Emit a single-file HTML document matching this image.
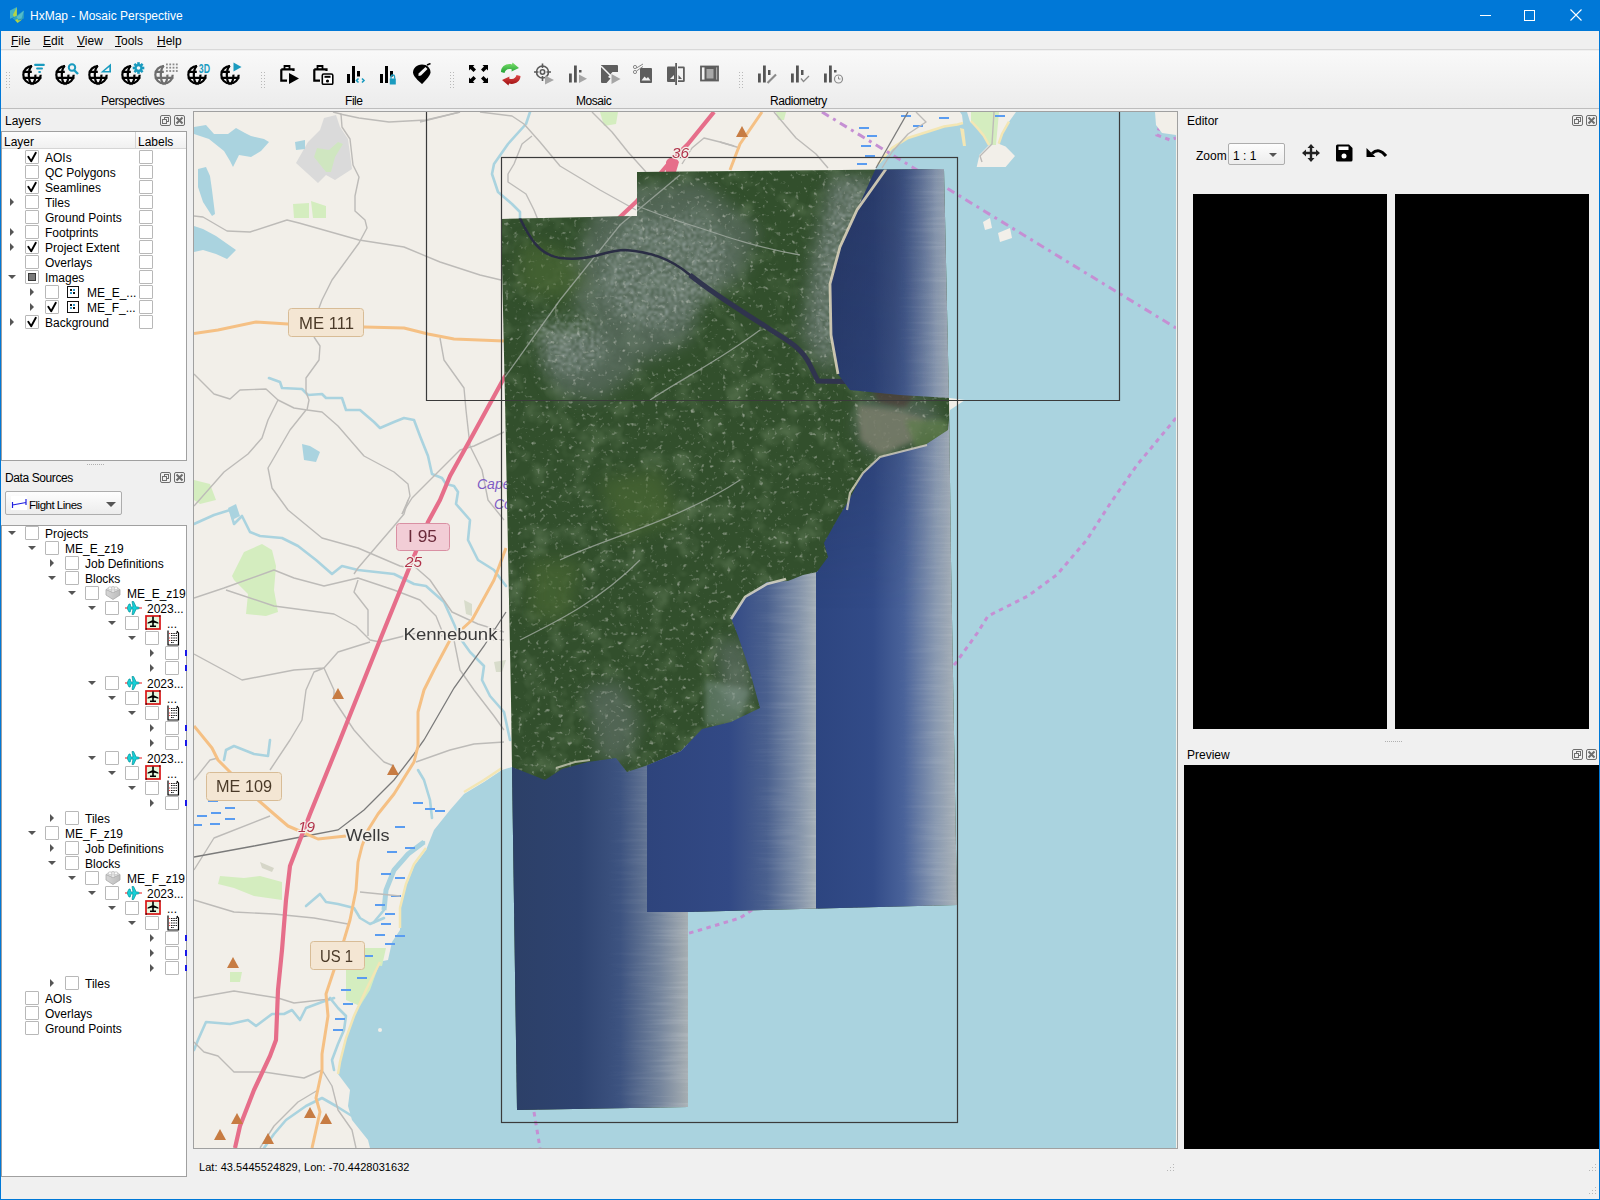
<!DOCTYPE html>
<html><head><meta charset="utf-8">
<style>
*{margin:0;padding:0;box-sizing:border-box}
html,body{width:1600px;height:1200px;overflow:hidden;background:#f0f0f0;font-family:"Liberation Sans",sans-serif;font-size:12px;color:#000}
.a{position:absolute}
#title{left:0;top:0;width:1600px;height:31px;background:#0078d7;color:#fff}
#wb{left:0;top:0;width:1600px;height:1200px;border:1px solid #0078d7;border-top:none;pointer-events:none}
.t{position:absolute;white-space:nowrap;line-height:14px}
.cb{position:absolute;width:14px;height:14px;border:1px solid #b8b8b8;border-radius:1px;background:#fff}
.arr{position:absolute;width:0;height:0}
.ad{border-left:4px solid transparent;border-right:4px solid transparent;border-top:4px solid #555}
.ar{border-top:4px solid transparent;border-bottom:4px solid transparent;border-left:4px solid #555}
.dockbtn{position:absolute;width:11px;height:11px;border:1px solid #6e6e6e;border-radius:2px}
.tbl{position:absolute;top:94px;font-size:12px;line-height:14px;letter-spacing:-0.45px}
</style></head><body>
<div id="title" class="a">
  <svg class="a" style="left:9px;top:6px" width="16" height="18" viewBox="0 0 16 18"><path d="M1 4.5 L7.8 1 L7.8 10 L1 12.7Z" fill="#42b2c6"/><path d="M3.5 12.5 L14.8 4.5 L14.8 12.5 L7.5 15Z" fill="#2fa2bd"/><path d="M7.5 11 L14.8 4.8 L12.5 12.5 L9 13Z" fill="#55bccb"/><path d="M3.8 9 L7.8 1.2 L7.8 9.8 L5.2 10.8Z" fill="#b5d444"/><path d="M6 14 L8.5 17 L13.5 13.3 L9.5 14.5 L8.5 13Z" fill="#b5d444"/></svg>
  <div class="t" style="left:30px;top:9px;font-size:12px;line-height:15px">HxMap - Mosaic Perspective</div>
  <div class="a" style="left:1480px;top:15px;width:11px;height:1px;background:#fff"></div>
  <div class="a" style="left:1524px;top:10px;width:11px;height:11px;border:1px solid #fff"></div>
  <svg class="a" style="left:1570px;top:9px" width="12" height="12"><path d="M0.5 0.5L11.5 11.5M11.5 0.5L0.5 11.5" stroke="#fff" stroke-width="1.1"/></svg>
</div>
<!-- menu -->
<div class="a" style="left:1px;top:31px;width:1598px;height:19px;background:#f0f0f0;border-bottom:1px solid #d9d9d9"></div>
<div class="t" style="left:11px;top:34px"><u>F</u>ile</div>
<div class="t" style="left:43px;top:34px"><u>E</u>dit</div>
<div class="t" style="left:77px;top:34px"><u>V</u>iew</div>
<div class="t" style="left:115px;top:34px"><u>T</u>ools</div>
<div class="t" style="left:157px;top:34px"><u>H</u>elp</div>
<!-- toolbar -->
<div class="a" style="left:1px;top:51px;width:1598px;height:58px;background:linear-gradient(#f9f9f9,#ececec);border-bottom:1px solid #bdbdbd"></div>
<svg class="a" style="left:6px;top:72px" width="4" height="16" viewBox="0 0 4 16"><rect x="0" y="0" width="1" height="1" fill="#b9b9b9"/><rect x="0" y="3" width="1" height="1" fill="#b9b9b9"/><rect x="0" y="6" width="1" height="1" fill="#b9b9b9"/><rect x="0" y="9" width="1" height="1" fill="#b9b9b9"/><rect x="0" y="12" width="1" height="1" fill="#b9b9b9"/><rect x="0" y="15" width="1" height="1" fill="#b9b9b9"/><rect x="3" y="0" width="1" height="1" fill="#b9b9b9"/><rect x="3" y="3" width="1" height="1" fill="#b9b9b9"/><rect x="3" y="6" width="1" height="1" fill="#b9b9b9"/><rect x="3" y="9" width="1" height="1" fill="#b9b9b9"/><rect x="3" y="12" width="1" height="1" fill="#b9b9b9"/><rect x="3" y="15" width="1" height="1" fill="#b9b9b9"/></svg>
<svg class="a" style="left:261px;top:72px" width="4" height="16" viewBox="0 0 4 16"><rect x="0" y="0" width="1" height="1" fill="#b9b9b9"/><rect x="0" y="3" width="1" height="1" fill="#b9b9b9"/><rect x="0" y="6" width="1" height="1" fill="#b9b9b9"/><rect x="0" y="9" width="1" height="1" fill="#b9b9b9"/><rect x="0" y="12" width="1" height="1" fill="#b9b9b9"/><rect x="0" y="15" width="1" height="1" fill="#b9b9b9"/><rect x="3" y="0" width="1" height="1" fill="#b9b9b9"/><rect x="3" y="3" width="1" height="1" fill="#b9b9b9"/><rect x="3" y="6" width="1" height="1" fill="#b9b9b9"/><rect x="3" y="9" width="1" height="1" fill="#b9b9b9"/><rect x="3" y="12" width="1" height="1" fill="#b9b9b9"/><rect x="3" y="15" width="1" height="1" fill="#b9b9b9"/></svg>
<svg class="a" style="left:450px;top:72px" width="4" height="16" viewBox="0 0 4 16"><rect x="0" y="0" width="1" height="1" fill="#b9b9b9"/><rect x="0" y="3" width="1" height="1" fill="#b9b9b9"/><rect x="0" y="6" width="1" height="1" fill="#b9b9b9"/><rect x="0" y="9" width="1" height="1" fill="#b9b9b9"/><rect x="0" y="12" width="1" height="1" fill="#b9b9b9"/><rect x="0" y="15" width="1" height="1" fill="#b9b9b9"/><rect x="3" y="0" width="1" height="1" fill="#b9b9b9"/><rect x="3" y="3" width="1" height="1" fill="#b9b9b9"/><rect x="3" y="6" width="1" height="1" fill="#b9b9b9"/><rect x="3" y="9" width="1" height="1" fill="#b9b9b9"/><rect x="3" y="12" width="1" height="1" fill="#b9b9b9"/><rect x="3" y="15" width="1" height="1" fill="#b9b9b9"/></svg>
<svg class="a" style="left:739px;top:72px" width="4" height="16" viewBox="0 0 4 16"><rect x="0" y="0" width="1" height="1" fill="#b9b9b9"/><rect x="0" y="3" width="1" height="1" fill="#b9b9b9"/><rect x="0" y="6" width="1" height="1" fill="#b9b9b9"/><rect x="0" y="9" width="1" height="1" fill="#b9b9b9"/><rect x="0" y="12" width="1" height="1" fill="#b9b9b9"/><rect x="0" y="15" width="1" height="1" fill="#b9b9b9"/><rect x="3" y="0" width="1" height="1" fill="#b9b9b9"/><rect x="3" y="3" width="1" height="1" fill="#b9b9b9"/><rect x="3" y="6" width="1" height="1" fill="#b9b9b9"/><rect x="3" y="9" width="1" height="1" fill="#b9b9b9"/><rect x="3" y="12" width="1" height="1" fill="#b9b9b9"/><rect x="3" y="15" width="1" height="1" fill="#b9b9b9"/></svg>
<svg class="a" style="left:21px;top:62px" width="27" height="24" viewBox="0 0 27 24"><g fill="none" stroke="#000" stroke-width="2.2">
<path d="M11 4.1 A8.7 8.7 0 1 0 19.7 12.8"/>
<path d="M10.8 3.6 C6.8 7.5 6.8 18.5 10.8 22.4 M1.8 9.9 H10.8 M1.8 15.85 H20.4 M14.4 12.6 C14.6 17 13.7 20 11.3 22.4"/>
</g><g fill="#1a9bbf"><rect x="13.1" y="1.8" width="10.7" height="2.1" rx="1"/><rect x="15.1" y="5.4" width="6.9" height="2.1" rx="1"/><rect x="17.2" y="9" width="2.8" height="2.1" rx="1"/></g></svg>
<svg class="a" style="left:54px;top:62px" width="27" height="24" viewBox="0 0 27 24"><g fill="none" stroke="#000" stroke-width="2.2">
<path d="M11 4.1 A8.7 8.7 0 1 0 19.7 12.8"/>
<path d="M10.8 3.6 C6.8 7.5 6.8 18.5 10.8 22.4 M1.8 9.9 H10.8 M1.8 15.85 H20.4 M14.4 12.6 C14.6 17 13.7 20 11.3 22.4"/>
</g><circle cx="18" cy="5.5" r="3.2" fill="none" stroke="#1a9bbf" stroke-width="2"/><path d="M20 8 L24 12" stroke="#1a9bbf" stroke-width="2.4"/></svg>
<svg class="a" style="left:87px;top:62px" width="27" height="24" viewBox="0 0 27 24"><g fill="none" stroke="#000" stroke-width="2.2">
<path d="M11 4.1 A8.7 8.7 0 1 0 19.7 12.8"/>
<path d="M10.8 3.6 C6.8 7.5 6.8 18.5 10.8 22.4 M1.8 9.9 H10.8 M1.8 15.85 H20.4 M14.4 12.6 C14.6 17 13.7 20 11.3 22.4"/>
</g><path d="M13.5 10.5 L24 1.5 V10.5Z M17.5 9 L22.3 9 V5Z" fill="#1a9bbf" fill-rule="evenodd"/></svg>
<svg class="a" style="left:120px;top:62px" width="27" height="24" viewBox="0 0 27 24"><g fill="none" stroke="#000" stroke-width="2.2">
<path d="M11 4.1 A8.7 8.7 0 1 0 19.7 12.8"/>
<path d="M10.8 3.6 C6.8 7.5 6.8 18.5 10.8 22.4 M1.8 9.9 H10.8 M1.8 15.85 H20.4 M14.4 12.6 C14.6 17 13.7 20 11.3 22.4"/>
</g><rect x="17.2" y="0.2" width="2.6" height="11.6" fill="#1a9bbf" transform="rotate(0 18.5 6)"/><rect x="17.2" y="0.2" width="2.6" height="11.6" fill="#1a9bbf" transform="rotate(45 18.5 6)"/><rect x="17.2" y="0.2" width="2.6" height="11.6" fill="#1a9bbf" transform="rotate(90 18.5 6)"/><rect x="17.2" y="0.2" width="2.6" height="11.6" fill="#1a9bbf" transform="rotate(135 18.5 6)"/><circle cx="18.5" cy="6" r="4" fill="#1a9bbf"/><circle cx="18.5" cy="6" r="1.8" fill="#f6f6f6"/></svg>
<svg class="a" style="left:153px;top:62px" width="27" height="24" viewBox="0 0 27 24"><g fill="none" stroke="#6d6d6d" stroke-width="2.2">
<path d="M11 4.1 A8.7 8.7 0 1 0 19.7 12.8"/>
<path d="M10.8 3.6 C6.8 7.5 6.8 18.5 10.8 22.4 M1.8 9.9 H10.8 M1.8 15.85 H20.4 M14.4 12.6 C14.6 17 13.7 20 11.3 22.4"/>
</g><rect x="13.0" y="1.5" width="1.8" height="1.8" fill="#8a8a8a"/><rect x="13.0" y="4.8" width="1.8" height="1.8" fill="#8a8a8a"/><rect x="13.0" y="8.1" width="1.8" height="1.8" fill="#8a8a8a"/><rect x="16.3" y="1.5" width="1.8" height="1.8" fill="#8a8a8a"/><rect x="16.3" y="4.8" width="1.8" height="1.8" fill="#8a8a8a"/><rect x="16.3" y="8.1" width="1.8" height="1.8" fill="#8a8a8a"/><rect x="19.6" y="1.5" width="1.8" height="1.8" fill="#8a8a8a"/><rect x="19.6" y="4.8" width="1.8" height="1.8" fill="#8a8a8a"/><rect x="19.6" y="8.1" width="1.8" height="1.8" fill="#8a8a8a"/><rect x="22.9" y="1.5" width="1.8" height="1.8" fill="#8a8a8a"/><rect x="22.9" y="4.8" width="1.8" height="1.8" fill="#8a8a8a"/><rect x="22.9" y="8.1" width="1.8" height="1.8" fill="#8a8a8a"/></svg>
<svg class="a" style="left:186px;top:62px" width="27" height="24" viewBox="0 0 27 24"><g fill="none" stroke="#000" stroke-width="2.2">
<path d="M11 4.1 A8.7 8.7 0 1 0 19.7 12.8"/>
<path d="M10.8 3.6 C6.8 7.5 6.8 18.5 10.8 22.4 M1.8 9.9 H10.8 M1.8 15.85 H20.4 M14.4 12.6 C14.6 17 13.7 20 11.3 22.4"/>
</g><text x="12.8" y="11" font-family="Liberation Sans" font-weight="bold" font-size="13" fill="#1a9bbf" textLength="11.2" lengthAdjust="spacingAndGlyphs">3D</text></svg>
<svg class="a" style="left:219px;top:62px" width="27" height="24" viewBox="0 0 27 24"><g fill="none" stroke="#000" stroke-width="2.2">
<path d="M11 4.1 A8.7 8.7 0 1 0 19.7 12.8"/>
<path d="M10.8 3.6 C6.8 7.5 6.8 18.5 10.8 22.4 M1.8 9.9 H10.8 M1.8 15.85 H20.4 M14.4 12.6 C14.6 17 13.7 20 11.3 22.4"/>
</g><path d="M14.5 0.5 L22.5 5 L14.5 9.5Z" fill="#1a9bbf"/></svg>
<svg class="a" style="left:277px;top:63px" width="24" height="22" viewBox="0 0 24 22"><path d="M4.3 6.3 H16.5 V8 M4.3 6.3 V17.7 H10" fill="none" stroke="#000" stroke-width="2.2"/><path d="M7.5 6 V3 H12.5 V6" fill="none" stroke="#000" stroke-width="1.8"/><path d="M12 10 L22 15.5 L12 21Z" fill="#000"/></svg>
<svg class="a" style="left:310px;top:63px" width="24" height="22" viewBox="0 0 24 22"><path d="M4.3 6.3 H16.5 V8 M4.3 6.3 V17.7 H10" fill="none" stroke="#000" stroke-width="2.2"/><path d="M7.5 6 V3 H12.5 V6" fill="none" stroke="#000" stroke-width="1.8"/><rect x="12.3" y="11" width="10.5" height="10.4" rx="1.5" fill="#fff" stroke="#000" stroke-width="1.6"/><rect x="14.5" y="12.8" width="6" height="2" fill="#000"/><circle cx="17.5" cy="18" r="1.6" fill="#000"/></svg>
<svg class="a" style="left:346px;top:64px" width="22" height="21" viewBox="0 0 22 21"><rect x="1" y="10" width="3" height="9" fill="#000"/><rect x="6" y="2" width="3" height="17" fill="#000"/><rect x="11" y="7" width="3" height="5.5" fill="#000"/><path d="M12.5 14.5 L10.5 16.5 L12.5 18.5 M16 14.5 L18 16.5 L16 18.5" fill="none" stroke="#1a9bbf" stroke-width="1.6"/></svg>
<svg class="a" style="left:379px;top:64px" width="22" height="21" viewBox="0 0 22 21"><rect x="1" y="10" width="3" height="9" fill="#000"/><rect x="6" y="2" width="3" height="17" fill="#000"/><rect x="11" y="7" width="3" height="5.5" fill="#000"/><rect x="10.8" y="14.5" width="6" height="6" fill="#1a9bbf"/><path d="M12 14.8 V12.8 A1.8 1.8 0 0 1 15.6 12.8 V14.8" fill="none" stroke="#1a9bbf" stroke-width="1.3"/></svg>
<svg class="a" style="left:412px;top:63px" width="20" height="22" viewBox="0 0 20 22"><path d="M10 1.5 C4.5 1.5 1 5.5 1 9.5 C1 14 10 21 10 21 C10 21 18.5 13 18.5 9.5 C18.5 5 15 1.5 10 1.5Z" fill="#000"/><path d="M6.5 13 L6.5 10.5 L13.5 4 L15.5 6 L9 12.5Z" fill="#f3f3f3"/><path d="M15 2 L18.5 0.5" stroke="#000" stroke-width="1.5"/></svg>
<svg class="a" style="left:468px;top:64px" width="21" height="20" viewBox="0 0 21 20"><path d="M1 1 H6.5 L5 2.5 L8 5.5 L5.5 8 L2.5 5 L1 6.5Z M20 1 V6.5 L18.5 5 L15.5 8 L13 5.5 L16 2.5 L14.5 1Z M1 19 V13.5 L2.5 15 L5.5 12 L8 14.5 L5 17.5 L6.5 19Z M20 19 H14.5 L16 17.5 L13 14.5 L15.5 12 L18.5 15 L20 13.5Z" fill="#000"/></svg>
<svg class="a" style="left:499px;top:62px" width="24" height="24" viewBox="0 0 24 24"><defs><linearGradient id="gg" x1="0" y1="0" x2="0" y2="1"><stop offset="0" stop-color="#7be06a"/><stop offset="1" stop-color="#21a035"/></linearGradient><linearGradient id="rg" x1="0" y1="0" x2="0" y2="1"><stop offset="0" stop-color="#e04848"/><stop offset="1" stop-color="#9a0c0c"/></linearGradient></defs><path d="M2 10 C2 4 8 1 13 2.5 L13.5 0.5 L20 6 L12.5 9.5 L12.8 7.5 C9 6 6 8 5.5 11Z" fill="url(#gg)"/><path d="M21.5 14 C21.5 20 15 23 10 21.5 L9.5 23.5 L3 18 L10.5 14.5 L10.2 16.5 C14 18 17 16 17.5 13Z" fill="url(#rg)"/></svg>
<svg class="a" style="left:533px;top:63px" width="24" height="22" viewBox="0 0 24 22"><g fill="none" stroke="#5a5a5a" stroke-width="1.6"><circle cx="9.5" cy="9" r="6"/><circle cx="9.5" cy="9" r="2.2"/><path d="M9.5 0.5V5M9.5 13V18M1 9H5.5M13.5 9H18"/></g><path d="M12 12.5 L21 17 L12 21.5Z" fill="#a6a6a6"/></svg>
<svg class="a" style="left:568px;top:64px" width="22" height="21" viewBox="0 0 22 21"><rect x="1" y="9.5" width="2.8" height="9" fill="#555"/><rect x="6" y="1.5" width="2.8" height="17" fill="#555"/><rect x="11" y="6" width="2.5" height="2.5" fill="#555"/><path d="M11 10.5 L19 14.8 L11 19Z" fill="#a6a6a6"/></svg>
<svg class="a" style="left:600px;top:64px" width="22" height="21" viewBox="0 0 22 21"><path d="M1 1 H17 Q18 1 18 2 V8 H12.5 L8 13 L10.5 14.5 L6.5 19 H2 Q1 19 1 18Z" fill="#5e5e5e"/><path d="M1 2 L10 11" stroke="#f5f5f5" stroke-width="1.5"/><path d="M11.5 10 L20.5 15 L11.5 20Z" fill="#a6a6a6"/></svg>
<svg class="a" style="left:632px;top:63px" width="22" height="22" viewBox="0 0 22 22"><path d="M8 5 V19 Q8 20 9 20 H19 Q20 20 20 19 V6 Q20 5 19 5Z" fill="#5e5e5e"/><path d="M9.5 17.5 L12.5 13.5 L14.5 15.5 L16 14 L18.5 17.5Z" fill="#f3f3f3"/><g fill="none" stroke="#8a8a8a" stroke-width="1"><circle cx="3" cy="4" r="1.6"/><circle cx="3" cy="9" r="1.6"/><path d="M4.5 5 L11 1 M4.5 8 L11 3.5"/></g></svg>
<svg class="a" style="left:666px;top:62px" width="20" height="24" viewBox="0 0 20 24"><path d="M9.2 4.5 H2 Q1 4.5 1 5.5 V19 Q1 20 2 20 H9.2Z" fill="#5e5e5e"/><path d="M4 17 L8 13 V17Z" fill="#f3f3f3"/><rect x="9.2" y="1" width="1.8" height="22" fill="#5e5e5e"/><path d="M12 4.5 H17.5 Q18.8 4.5 18.8 5.8 V18.8 Q18.8 20 17.5 20 H12 V18.3 H17 V6.2 H12Z M12.5 13 L16 17 H12.5Z" fill="#5e5e5e"/></svg>
<svg class="a" style="left:700px;top:64px" width="20" height="20" viewBox="0 0 20 20"><rect x="1" y="2.5" width="17" height="14" fill="none" stroke="#5e5e5e" stroke-width="1.8"/><rect x="4.5" y="3" width="12" height="13.5" fill="#5e5e5e"/><rect x="6.5" y="5" width="7" height="9.5" fill="#a8a8a8"/></svg>
<svg class="a" style="left:757px;top:64px" width="22" height="21" viewBox="0 0 22 21"><rect x="1" y="9.5" width="2.8" height="9" fill="#555"/><rect x="6" y="1.5" width="2.8" height="17" fill="#555"/><rect x="11" y="6" width="2.5" height="5" fill="#555"/><path d="M10.5 19 L19 10.5" stroke="#8a8a8a" stroke-width="2.2"/></svg>
<svg class="a" style="left:790px;top:64px" width="22" height="21" viewBox="0 0 22 21"><rect x="1" y="9.5" width="2.8" height="9" fill="#555"/><rect x="6" y="1.5" width="2.8" height="17" fill="#555"/><rect x="11" y="6" width="2.5" height="5" fill="#555"/><path d="M11 14.5 L13.5 17.5 L19 12" fill="none" stroke="#8a8a8a" stroke-width="1.3"/></svg>
<svg class="a" style="left:823px;top:64px" width="22" height="21" viewBox="0 0 22 21"><rect x="1" y="9.5" width="2.8" height="9" fill="#555"/><rect x="6" y="1.5" width="2.8" height="17" fill="#555"/><rect x="11" y="6" width="2.5" height="2.5" fill="#555"/><circle cx="15.5" cy="15" r="4" fill="none" stroke="#8a8a8a" stroke-width="1.2"/><path d="M15.5 12.5 V15 H17.5" fill="none" stroke="#8a8a8a" stroke-width="1"/></svg>
<div class="tbl" style="left:101px">Perspectives</div>
<div class="tbl" style="left:345px">File</div>
<div class="tbl" style="left:576px">Mosaic</div>
<div class="tbl" style="left:770px">Radiometry</div>

<!-- left dock -->
<div class="t" style="left:5px;top:114px;">Layers</div>
<div class="dockbtn" style="left:160px;top:115px"><svg width="9" height="9" style="position:absolute;left:0;top:0"><rect x="3.5" y="1.5" width="4" height="4" fill="none" stroke="#6e6e6e"/><rect x="1.5" y="3.5" width="4" height="4" fill="#f0f0f0" stroke="#6e6e6e"/></svg></div>
<div class="dockbtn" style="left:174px;top:115px"><svg width="9" height="9" style="position:absolute;left:0;top:0"><path d="M1.5 1.5L7.5 7.5M7.5 1.5L1.5 7.5" stroke="#6e6e6e" stroke-width="2"/></svg></div>
<div class="a" style="left:1px;top:131px;width:186px;height:330px;background:#fff;border:1px solid #a0a0a0"></div>
<div class="a" style="left:2px;top:132px;width:184px;height:17px;background:linear-gradient(#fdfdfd,#f0f0f0);border-bottom:1px solid #d5d5d5"></div>
<div class="a" style="left:135px;top:132px;width:1px;height:17px;background:#d5d5d5"></div>
<div class="t" style="left:4px;top:135px;">Layer</div>
<div class="t" style="left:138px;top:135px;">Labels</div>
<div class="cb" style="left:25px;top:150px"><svg width="12" height="12" style="position:absolute;left:0;top:0"><path d="M2.3 5.8 L5.2 10.3 L9.8 1.8" stroke="#000" stroke-width="1.9" fill="none" stroke-linejoin="round" stroke-linecap="round"/></svg></div>
<div class="t" style="left:45px;top:151px;">AOIs</div>
<div class="cb" style="left:139px;top:150px"></div>
<div class="cb" style="left:25px;top:165px"></div>
<div class="t" style="left:45px;top:166px;">QC Polygons</div>
<div class="cb" style="left:139px;top:165px"></div>
<div class="cb" style="left:25px;top:180px"><svg width="12" height="12" style="position:absolute;left:0;top:0"><path d="M2.3 5.8 L5.2 10.3 L9.8 1.8" stroke="#000" stroke-width="1.9" fill="none" stroke-linejoin="round" stroke-linecap="round"/></svg></div>
<div class="t" style="left:45px;top:181px;">Seamlines</div>
<div class="cb" style="left:139px;top:180px"></div>
<div class="arr ar" style="left:10px;top:198px"></div>
<div class="cb" style="left:25px;top:195px"></div>
<div class="t" style="left:45px;top:196px;">Tiles</div>
<div class="cb" style="left:139px;top:195px"></div>
<div class="cb" style="left:25px;top:210px"></div>
<div class="t" style="left:45px;top:211px;">Ground Points</div>
<div class="cb" style="left:139px;top:210px"></div>
<div class="arr ar" style="left:10px;top:228px"></div>
<div class="cb" style="left:25px;top:225px"></div>
<div class="t" style="left:45px;top:226px;">Footprints</div>
<div class="cb" style="left:139px;top:225px"></div>
<div class="arr ar" style="left:10px;top:243px"></div>
<div class="cb" style="left:25px;top:240px"><svg width="12" height="12" style="position:absolute;left:0;top:0"><path d="M2.3 5.8 L5.2 10.3 L9.8 1.8" stroke="#000" stroke-width="1.9" fill="none" stroke-linejoin="round" stroke-linecap="round"/></svg></div>
<div class="t" style="left:45px;top:241px;">Project Extent</div>
<div class="cb" style="left:139px;top:240px"></div>
<div class="cb" style="left:25px;top:255px"></div>
<div class="t" style="left:45px;top:256px;">Overlays</div>
<div class="cb" style="left:139px;top:255px"></div>
<div class="arr ad" style="left:8px;top:275px"></div>
<div class="cb" style="left:25px;top:270px"><div style="position:absolute;left:2px;top:2px;width:8px;height:8px;background:#7a7a7a;border:1px solid #3a3a3a"></div></div>
<div class="t" style="left:45px;top:271px;">Images</div>
<div class="cb" style="left:139px;top:270px"></div>
<div class="arr ar" style="left:30px;top:288px"></div>
<div class="cb" style="left:45px;top:285px"></div>
<div class="a" style="left:67px;top:286px;width:12px;height:12px;border:1.5px solid #111;background:#fff"><div style="position:absolute;left:2px;top:2px;width:2px;height:2px;background:#111"></div><div style="position:absolute;left:5px;top:2px;width:2px;height:2px;background:#2a9bd0"></div><div style="position:absolute;left:2px;top:5px;width:2px;height:2px;background:#2a9bd0"></div><div style="position:absolute;left:5px;top:5px;width:2px;height:2px;background:#111"></div></div>
<div class="t" style="left:87px;top:286px;">ME_E_...</div>
<div class="cb" style="left:139px;top:285px"></div>
<div class="arr ar" style="left:30px;top:303px"></div>
<div class="cb" style="left:45px;top:300px"><svg width="12" height="12" style="position:absolute;left:0;top:0"><path d="M2.3 5.8 L5.2 10.3 L9.8 1.8" stroke="#000" stroke-width="1.9" fill="none" stroke-linejoin="round" stroke-linecap="round"/></svg></div>
<div class="a" style="left:67px;top:301px;width:12px;height:12px;border:1.5px solid #111;background:#fff"><div style="position:absolute;left:2px;top:2px;width:2px;height:2px;background:#111"></div><div style="position:absolute;left:5px;top:2px;width:2px;height:2px;background:#2a9bd0"></div><div style="position:absolute;left:2px;top:5px;width:2px;height:2px;background:#2a9bd0"></div><div style="position:absolute;left:5px;top:5px;width:2px;height:2px;background:#111"></div></div>
<div class="t" style="left:87px;top:301px;">ME_F_...</div>
<div class="cb" style="left:139px;top:300px"></div>
<div class="arr ar" style="left:10px;top:318px"></div>
<div class="cb" style="left:25px;top:315px"><svg width="12" height="12" style="position:absolute;left:0;top:0"><path d="M2.3 5.8 L5.2 10.3 L9.8 1.8" stroke="#000" stroke-width="1.9" fill="none" stroke-linejoin="round" stroke-linecap="round"/></svg></div>
<div class="t" style="left:45px;top:316px;">Background</div>
<div class="cb" style="left:139px;top:315px"></div>
<div class="a" style="left:87px;top:464px;width:17px;height:1px;border-top:1px dotted #b0b0b0"></div>
<div class="t" style="left:5px;top:471px;letter-spacing:-0.4px">Data Sources</div>
<div class="dockbtn" style="left:160px;top:472px"><svg width="9" height="9" style="position:absolute;left:0;top:0"><rect x="3.5" y="1.5" width="4" height="4" fill="none" stroke="#6e6e6e"/><rect x="1.5" y="3.5" width="4" height="4" fill="#f0f0f0" stroke="#6e6e6e"/></svg></div>
<div class="dockbtn" style="left:174px;top:472px"><svg width="9" height="9" style="position:absolute;left:0;top:0"><path d="M1.5 1.5L7.5 7.5M7.5 1.5L1.5 7.5" stroke="#6e6e6e" stroke-width="2"/></svg></div>
<div class="a" style="left:5px;top:491px;width:117px;height:24px;border:1px solid #adadad;border-radius:2px;background:linear-gradient(#fdfdfd,#ececec)"></div>
<div class="a" style="left:11px;top:496px;width:16px;height:14px;background:#fff"><svg width="16" height="14"><path d="M1.5 6 V12 M1.5 9 L15 6.5 M15 3 V9" stroke="#1f1fe0" stroke-width="1.2" fill="none"/></svg></div>
<div class="t" style="left:29px;top:498px;letter-spacing:-0.5px;font-size:11.5px">Flight Lines</div>
<div class="arr ad" style="left:106px;top:502px;border-left-width:5px;border-right-width:5px;border-top-width:5px"></div>
<div class="a" style="left:1px;top:525px;width:186px;height:652px;background:#fff;border:1px solid #a0a0a0"></div>
<div class="arr ad" style="left:8px;top:531px"></div>
<div class="cb" style="left:25px;top:526px"></div>
<div class="t" style="left:45px;top:527px;">Projects</div>
<div class="arr ad" style="left:28px;top:546px"></div>
<div class="cb" style="left:45px;top:541px"></div>
<div class="t" style="left:65px;top:542px;">ME_E_z19</div>
<div class="arr ar" style="left:50px;top:559px"></div>
<div class="cb" style="left:65px;top:556px"></div>
<div class="t" style="left:85px;top:557px;">Job Definitions</div>
<div class="arr ad" style="left:48px;top:576px"></div>
<div class="cb" style="left:65px;top:571px"></div>
<div class="t" style="left:85px;top:572px;">Blocks</div>
<div class="arr ad" style="left:68px;top:591px"></div>
<div class="cb" style="left:85px;top:586px"></div>
<svg class="a" style="left:105px;top:585px" width="16" height="15" viewBox="0 0 16 15"><defs><linearGradient id="lg593" x1="0" x2="1"><stop offset="0" stop-color="#d6d6d6"/><stop offset="1" stop-color="#bcbcbc"/></linearGradient></defs><path d="M1 4.5 L8 7.5 L15 4.5 V10 L8 14.5 L1 10Z" fill="url(#lg593)" stroke="#a8a8a8" stroke-width="0.8"/><path d="M1 4.5 L8 1.5 L15 4.5 L8 7.5Z" fill="#f2f2f2" stroke="#b0b0b0" stroke-width="0.8"/><path d="M3.2 2.5 V4.2 Q5 5.6 6.8 4.2 V2.5 Q5 1 3.2 2.5Z M9.2 2.5 V4.2 Q11 5.6 12.8 4.2 V2.5 Q11 1 9.2 2.5Z M6.2 5 V6.6 Q8 8 9.8 6.6 V5Z" fill="#fafafa" stroke="#b4b4b4" stroke-width="0.7"/></svg>
<div class="t" style="left:127px;top:587px;">ME_E_z19</div>
<div class="arr ad" style="left:88px;top:606px"></div>
<div class="cb" style="left:105px;top:601px"></div>
<svg class="a" style="left:125px;top:601px" width="17" height="14" viewBox="0 0 17 14"><path d="M0 7H2.5M14 7H17" stroke="#e81818" stroke-width="1.1"/><path d="M2.5 6 L4 3 L5.2 3 L5.8 6 L8 6 L7 0.5 L8.6 0.5 L11.2 6 L13.5 6 Q15 7 13.5 8 L11.2 8 L8.6 13.5 L7 13.5 L8 8 L5.8 8 L5.2 11 L4 11 L2.5 8Z" fill="#14d0d8" stroke="#0a9098" stroke-width="0.7"/></svg>
<div class="t" style="left:147px;top:602px;">2023...</div>
<div class="arr ad" style="left:108px;top:621px"></div>
<div class="cb" style="left:125px;top:616px"></div>
<svg class="a" style="left:145px;top:615px" width="16" height="15" viewBox="0 0 16 15"><rect x="1" y="1" width="14" height="13" fill="#e4f8e0" stroke="#d81414" stroke-width="1.7"/><path d="M7.2 1.6 H8.8 V12 H7.2Z M2.6 7.6 L7.2 5.2 V7.4 L2.6 8.8Z M13.4 7.6 L8.8 5.2 V7.4 L13.4 8.8Z M5 10.6 H11 V12 H5Z" fill="#000"/><path d="M0.5 14H2M14 1H15.5" stroke="#000" stroke-width="1"/></svg>
<div class="t" style="left:167px;top:617px;">...</div>
<div class="arr ad" style="left:128px;top:636px"></div>
<div class="cb" style="left:145px;top:631px"></div>
<svg class="a" style="left:167px;top:630px" width="13" height="16" viewBox="0 0 13 16"><path d="M1 0.5 V15 H11.5 V3 L10 1.5" fill="#fff" stroke="#000" stroke-width="1.2"/><path d="M9.5 2.5 Q10 0.5 11 1.5" fill="none" stroke="#000" stroke-width="0.9"/><path d="M4 3.5H10M4 5.5H10M4 8H10M4 10.5H10M4 12.5H7" stroke="#000" stroke-width="0.9" stroke-dasharray="1.5 0.8"/><path d="M2.2 3.5H3.2M2.2 8H3.2M2.2 10.5H3.2" stroke="#e00" stroke-width="0.9"/></svg>
<div class="arr ar" style="left:150px;top:649px"></div>
<div class="cb" style="left:165px;top:646px"></div>
<div class="a" style="left:185px;top:650px;width:2px;height:6px;background:#1818e8"></div>
<div class="arr ar" style="left:150px;top:664px"></div>
<div class="cb" style="left:165px;top:661px"></div>
<div class="a" style="left:185px;top:665px;width:2px;height:6px;background:#1818e8"></div>
<div class="arr ad" style="left:88px;top:681px"></div>
<div class="cb" style="left:105px;top:676px"></div>
<svg class="a" style="left:125px;top:676px" width="17" height="14" viewBox="0 0 17 14"><path d="M0 7H2.5M14 7H17" stroke="#e81818" stroke-width="1.1"/><path d="M2.5 6 L4 3 L5.2 3 L5.8 6 L8 6 L7 0.5 L8.6 0.5 L11.2 6 L13.5 6 Q15 7 13.5 8 L11.2 8 L8.6 13.5 L7 13.5 L8 8 L5.8 8 L5.2 11 L4 11 L2.5 8Z" fill="#14d0d8" stroke="#0a9098" stroke-width="0.7"/></svg>
<div class="t" style="left:147px;top:677px;">2023...</div>
<div class="arr ad" style="left:108px;top:696px"></div>
<div class="cb" style="left:125px;top:691px"></div>
<svg class="a" style="left:145px;top:690px" width="16" height="15" viewBox="0 0 16 15"><rect x="1" y="1" width="14" height="13" fill="#e4f8e0" stroke="#d81414" stroke-width="1.7"/><path d="M7.2 1.6 H8.8 V12 H7.2Z M2.6 7.6 L7.2 5.2 V7.4 L2.6 8.8Z M13.4 7.6 L8.8 5.2 V7.4 L13.4 8.8Z M5 10.6 H11 V12 H5Z" fill="#000"/><path d="M0.5 14H2M14 1H15.5" stroke="#000" stroke-width="1"/></svg>
<div class="t" style="left:167px;top:692px;">...</div>
<div class="arr ad" style="left:128px;top:711px"></div>
<div class="cb" style="left:145px;top:706px"></div>
<svg class="a" style="left:167px;top:705px" width="13" height="16" viewBox="0 0 13 16"><path d="M1 0.5 V15 H11.5 V3 L10 1.5" fill="#fff" stroke="#000" stroke-width="1.2"/><path d="M9.5 2.5 Q10 0.5 11 1.5" fill="none" stroke="#000" stroke-width="0.9"/><path d="M4 3.5H10M4 5.5H10M4 8H10M4 10.5H10M4 12.5H7" stroke="#000" stroke-width="0.9" stroke-dasharray="1.5 0.8"/><path d="M2.2 3.5H3.2M2.2 8H3.2M2.2 10.5H3.2" stroke="#e00" stroke-width="0.9"/></svg>
<div class="arr ar" style="left:150px;top:724px"></div>
<div class="cb" style="left:165px;top:721px"></div>
<div class="a" style="left:185px;top:725px;width:2px;height:6px;background:#1818e8"></div>
<div class="arr ar" style="left:150px;top:739px"></div>
<div class="cb" style="left:165px;top:736px"></div>
<div class="a" style="left:185px;top:740px;width:2px;height:6px;background:#1818e8"></div>
<div class="arr ad" style="left:88px;top:756px"></div>
<div class="cb" style="left:105px;top:751px"></div>
<svg class="a" style="left:125px;top:751px" width="17" height="14" viewBox="0 0 17 14"><path d="M0 7H2.5M14 7H17" stroke="#e81818" stroke-width="1.1"/><path d="M2.5 6 L4 3 L5.2 3 L5.8 6 L8 6 L7 0.5 L8.6 0.5 L11.2 6 L13.5 6 Q15 7 13.5 8 L11.2 8 L8.6 13.5 L7 13.5 L8 8 L5.8 8 L5.2 11 L4 11 L2.5 8Z" fill="#14d0d8" stroke="#0a9098" stroke-width="0.7"/></svg>
<div class="t" style="left:147px;top:752px;">2023...</div>
<div class="arr ad" style="left:108px;top:771px"></div>
<div class="cb" style="left:125px;top:766px"></div>
<svg class="a" style="left:145px;top:765px" width="16" height="15" viewBox="0 0 16 15"><rect x="1" y="1" width="14" height="13" fill="#e4f8e0" stroke="#d81414" stroke-width="1.7"/><path d="M7.2 1.6 H8.8 V12 H7.2Z M2.6 7.6 L7.2 5.2 V7.4 L2.6 8.8Z M13.4 7.6 L8.8 5.2 V7.4 L13.4 8.8Z M5 10.6 H11 V12 H5Z" fill="#000"/><path d="M0.5 14H2M14 1H15.5" stroke="#000" stroke-width="1"/></svg>
<div class="t" style="left:167px;top:767px;">...</div>
<div class="arr ad" style="left:128px;top:786px"></div>
<div class="cb" style="left:145px;top:781px"></div>
<svg class="a" style="left:167px;top:780px" width="13" height="16" viewBox="0 0 13 16"><path d="M1 0.5 V15 H11.5 V3 L10 1.5" fill="#fff" stroke="#000" stroke-width="1.2"/><path d="M9.5 2.5 Q10 0.5 11 1.5" fill="none" stroke="#000" stroke-width="0.9"/><path d="M4 3.5H10M4 5.5H10M4 8H10M4 10.5H10M4 12.5H7" stroke="#000" stroke-width="0.9" stroke-dasharray="1.5 0.8"/><path d="M2.2 3.5H3.2M2.2 8H3.2M2.2 10.5H3.2" stroke="#e00" stroke-width="0.9"/></svg>
<div class="arr ar" style="left:150px;top:799px"></div>
<div class="cb" style="left:165px;top:796px"></div>
<div class="a" style="left:185px;top:800px;width:2px;height:6px;background:#1818e8"></div>
<div class="arr ar" style="left:50px;top:814px"></div>
<div class="cb" style="left:65px;top:811px"></div>
<div class="t" style="left:85px;top:812px;">Tiles</div>
<div class="arr ad" style="left:28px;top:831px"></div>
<div class="cb" style="left:45px;top:826px"></div>
<div class="t" style="left:65px;top:827px;">ME_F_z19</div>
<div class="arr ar" style="left:50px;top:844px"></div>
<div class="cb" style="left:65px;top:841px"></div>
<div class="t" style="left:85px;top:842px;">Job Definitions</div>
<div class="arr ad" style="left:48px;top:861px"></div>
<div class="cb" style="left:65px;top:856px"></div>
<div class="t" style="left:85px;top:857px;">Blocks</div>
<div class="arr ad" style="left:68px;top:876px"></div>
<div class="cb" style="left:85px;top:871px"></div>
<svg class="a" style="left:105px;top:870px" width="16" height="15" viewBox="0 0 16 15"><defs><linearGradient id="lg878" x1="0" x2="1"><stop offset="0" stop-color="#d6d6d6"/><stop offset="1" stop-color="#bcbcbc"/></linearGradient></defs><path d="M1 4.5 L8 7.5 L15 4.5 V10 L8 14.5 L1 10Z" fill="url(#lg878)" stroke="#a8a8a8" stroke-width="0.8"/><path d="M1 4.5 L8 1.5 L15 4.5 L8 7.5Z" fill="#f2f2f2" stroke="#b0b0b0" stroke-width="0.8"/><path d="M3.2 2.5 V4.2 Q5 5.6 6.8 4.2 V2.5 Q5 1 3.2 2.5Z M9.2 2.5 V4.2 Q11 5.6 12.8 4.2 V2.5 Q11 1 9.2 2.5Z M6.2 5 V6.6 Q8 8 9.8 6.6 V5Z" fill="#fafafa" stroke="#b4b4b4" stroke-width="0.7"/></svg>
<div class="t" style="left:127px;top:872px;">ME_F_z19</div>
<div class="arr ad" style="left:88px;top:891px"></div>
<div class="cb" style="left:105px;top:886px"></div>
<svg class="a" style="left:125px;top:886px" width="17" height="14" viewBox="0 0 17 14"><path d="M0 7H2.5M14 7H17" stroke="#e81818" stroke-width="1.1"/><path d="M2.5 6 L4 3 L5.2 3 L5.8 6 L8 6 L7 0.5 L8.6 0.5 L11.2 6 L13.5 6 Q15 7 13.5 8 L11.2 8 L8.6 13.5 L7 13.5 L8 8 L5.8 8 L5.2 11 L4 11 L2.5 8Z" fill="#14d0d8" stroke="#0a9098" stroke-width="0.7"/></svg>
<div class="t" style="left:147px;top:887px;">2023...</div>
<div class="arr ad" style="left:108px;top:906px"></div>
<div class="cb" style="left:125px;top:901px"></div>
<svg class="a" style="left:145px;top:900px" width="16" height="15" viewBox="0 0 16 15"><rect x="1" y="1" width="14" height="13" fill="#e4f8e0" stroke="#d81414" stroke-width="1.7"/><path d="M7.2 1.6 H8.8 V12 H7.2Z M2.6 7.6 L7.2 5.2 V7.4 L2.6 8.8Z M13.4 7.6 L8.8 5.2 V7.4 L13.4 8.8Z M5 10.6 H11 V12 H5Z" fill="#000"/><path d="M0.5 14H2M14 1H15.5" stroke="#000" stroke-width="1"/></svg>
<div class="t" style="left:167px;top:902px;">...</div>
<div class="arr ad" style="left:128px;top:921px"></div>
<div class="cb" style="left:145px;top:916px"></div>
<svg class="a" style="left:167px;top:915px" width="13" height="16" viewBox="0 0 13 16"><path d="M1 0.5 V15 H11.5 V3 L10 1.5" fill="#fff" stroke="#000" stroke-width="1.2"/><path d="M9.5 2.5 Q10 0.5 11 1.5" fill="none" stroke="#000" stroke-width="0.9"/><path d="M4 3.5H10M4 5.5H10M4 8H10M4 10.5H10M4 12.5H7" stroke="#000" stroke-width="0.9" stroke-dasharray="1.5 0.8"/><path d="M2.2 3.5H3.2M2.2 8H3.2M2.2 10.5H3.2" stroke="#e00" stroke-width="0.9"/></svg>
<div class="arr ar" style="left:150px;top:934px"></div>
<div class="cb" style="left:165px;top:931px"></div>
<div class="a" style="left:185px;top:935px;width:2px;height:6px;background:#1818e8"></div>
<div class="arr ar" style="left:150px;top:949px"></div>
<div class="cb" style="left:165px;top:946px"></div>
<div class="a" style="left:185px;top:950px;width:2px;height:6px;background:#1818e8"></div>
<div class="arr ar" style="left:150px;top:964px"></div>
<div class="cb" style="left:165px;top:961px"></div>
<div class="a" style="left:185px;top:965px;width:2px;height:6px;background:#1818e8"></div>
<div class="arr ar" style="left:50px;top:979px"></div>
<div class="cb" style="left:65px;top:976px"></div>
<div class="t" style="left:85px;top:977px;">Tiles</div>
<div class="cb" style="left:25px;top:991px"></div>
<div class="t" style="left:45px;top:992px;">AOIs</div>
<div class="cb" style="left:25px;top:1006px"></div>
<div class="t" style="left:45px;top:1007px;">Overlays</div>
<div class="cb" style="left:25px;top:1021px"></div>
<div class="t" style="left:45px;top:1022px;">Ground Points</div>
<!-- map -->
<div id="map" class="a" style="left:193px;top:111px;width:985px;height:1038px;border:1px solid #a0a0a0;overflow:hidden;background:#f2efe9"><svg style="position:absolute;left:0;top:0" width="982" height="1036" viewBox="194 112 982 1036">
<defs>
<filter id="mottle" x="494" y="160" width="470" height="960" filterUnits="userSpaceOnUse">
 <feTurbulence type="fractalNoise" baseFrequency="0.04" numOctaves="3" seed="7" result="n"/>
 <feColorMatrix in="n" type="matrix" values="0 0 0 0 0.28  0 0 0 0 0.40  0 0 0 0 0.23  0.9 0 0 0 -0.45"/>
</filter>
<filter id="specks" x="494" y="160" width="470" height="960" filterUnits="userSpaceOnUse">
 <feTurbulence type="fractalNoise" baseFrequency="0.22" numOctaves="2" seed="11" result="n"/>
 <feColorMatrix in="n" type="matrix" values="0 0 0 0 0.58  0 0 0 0 0.60  0 0 0 0 0.54  2.2 0 0 0 -1.38"/>
 <feGaussianBlur stdDeviation="0.6"/>
</filter>
<filter id="urban" x="494" y="160" width="470" height="960" filterUnits="userSpaceOnUse">
 <feTurbulence type="fractalNoise" baseFrequency="0.35" numOctaves="2" seed="5" result="n"/>
 <feColorMatrix in="n" type="matrix" values="0 0 0 0 0.56  0 0 0 0 0.61  0 0 0 0 0.64  1.6 0 0 0 -0.62"/>
 <feGaussianBlur stdDeviation="0.9"/>
</filter>
<filter id="soft" x="-20%" y="-20%" width="140%" height="140%"><feGaussianBlur stdDeviation="8"/></filter>
<filter id="streak" x="494" y="160" width="470" height="960" filterUnits="userSpaceOnUse"><feTurbulence type="fractalNoise" baseFrequency="0.02 0.35" numOctaves="2" seed="4"/><feColorMatrix type="matrix" values="0 0 0 0 0.75  0 0 0 0 0.78  0 0 0 0 0.82  1.2 0 0 0 -0.5"/></filter>
<linearGradient id="strA" x1="0" x2="1"><stop offset="0" stop-color="#000"/><stop offset="0.55" stop-color="#000"/><stop offset="1" stop-color="#fff"/></linearGradient>
<mask id="strMaskA" maskUnits="userSpaceOnUse" x="494" y="160" width="470" height="960"><rect x="500" y="160" width="188" height="960" fill="url(#strA)"/><rect x="647" y="160" width="171" height="752" fill="url(#strA)"/><rect x="816" y="160" width="142" height="750" fill="url(#strA)"/></mask>
<filter id="soft2" x="-20%" y="-20%" width="140%" height="140%"><feGaussianBlur stdDeviation="2.5"/></filter>
<clipPath id="satclip"><path d="M501 219 L637 216 L637 172 L944 169 L949 400 L951 560 L957 905 L688 912 L688 1107 L517 1110 L511 700 L505 400Z"/></clipPath>
<mask id="urbmask" maskUnits="userSpaceOnUse" x="494" y="160" width="470" height="960"><path d="M625 220 L700 215 L730 250 L715 290 L690 320 L655 330 L620 320 L600 290 L605 250Z M835 185 L872 182 L858 225 L845 265 L840 330 L830 370 L812 330 L818 260Z M530 320 L590 310 L610 350 L580 375 L545 370Z" fill="#fff" filter="url(#soft)"/></mask>
<clipPath id="seaclip"><path d="M1016 112 L1009 121.7 L1002 134 L998.7 143.7 L1005.6 146.5 L1015 156 L1005.6 167 L976.7 167 L979.5 154.7 L989 145 L983.6 135.5 L978 128.6 L970 121.7 L967 112 L960 112 L962 115 L963 123 L957.5 124.5 L944 126.5 L930 131 L908 138 L892 148 L876 168 L857 210 L840 247 L830 284 L831 335 L838 374 L850 390 L900 395 L950 398 L965 400 L950 410 L948 430 L925 445 L880 457 L863 473 L849 500 L838 518 L824 543 L828 557 L817 572 L803 575 L788 581 L767 582 L745 597 L731 618 L738 636 L749 668 L760 708 L731 722 L702 729 L681 751 L648 765 L627 772 L616 758 L588 762 L562 769 L545 780 L512 767 L502 770 L484 782 L464 794 L450 810 L434 830 L426 850 L414 866 L406 886 L400 910 L400 930 L392 942 L388 960 L378 962 L366 990 L354 1016 L346 1038 L340 1062 L338 1074 L350 1090 L348 1106 L352 1120 L368 1140 L370 1148 L1176 1148 L1176 112Z"/></clipPath>
<linearGradient id="glA" x1="0" x2="1" y1="0" y2="0"><stop offset="0" stop-color="#2c3f66"/><stop offset="0.42" stop-color="#2e4370"/><stop offset="0.64" stop-color="#3d5380"/><stop offset="0.85" stop-color="#74849c"/><stop offset="1" stop-color="#a6aeb2"/></linearGradient>
<linearGradient id="glB" x1="0" x2="1" y1="0" y2="0"><stop offset="0" stop-color="#2e447c"/><stop offset="0.48" stop-color="#324985"/><stop offset="0.7" stop-color="#4a608e"/><stop offset="0.88" stop-color="#8090a8"/><stop offset="1" stop-color="#a8b2b8"/></linearGradient>
<linearGradient id="glC" x1="0" x2="1" y1="0" y2="0"><stop offset="0" stop-color="#2d4580"/><stop offset="0.4" stop-color="#324b88"/><stop offset="0.62" stop-color="#4a639a"/><stop offset="0.84" stop-color="#8898b0"/><stop offset="1" stop-color="#acb4b8"/></linearGradient>
<linearGradient id="darkH" x1="0" x2="1" y1="0" y2="0"><stop offset="0" stop-color="#1c2440" stop-opacity="0.5"/><stop offset="0.55" stop-color="#1c2440" stop-opacity="0.4"/><stop offset="0.85" stop-color="#1c2440" stop-opacity="0.05"/><stop offset="1" stop-color="#1c2440" stop-opacity="0"/></linearGradient>
<linearGradient id="mTopG" x1="0" x2="0" y1="0" y2="1"><stop offset="0" stop-color="#fff"/><stop offset="0.5" stop-color="#aaa"/><stop offset="1" stop-color="#000"/></linearGradient>
<mask id="mTop" maskUnits="userSpaceOnUse" x="816" y="160" width="142" height="450"><rect x="816" y="160" width="142" height="450" fill="url(#mTopG)"/></mask>
<linearGradient id="darkTop" x1="0" x2="0" y1="0" y2="1"><stop offset="0" stop-color="#1c2440" stop-opacity="0.45"/><stop offset="0.5" stop-color="#1c2440" stop-opacity="0.3"/><stop offset="1" stop-color="#1c2440" stop-opacity="0"/></linearGradient>
</defs>
<rect x="194" y="112" width="982" height="1036" fill="#f2efe9"/>
<path d="M1016 112 L1009 121.7 L1002 134 L998.7 143.7 L1005.6 146.5 L1015 156 L1005.6 167 L976.7 167 L979.5 154.7 L989 145 L983.6 135.5 L978 128.6 L970 121.7 L967 112 L960 112 L962 115 L963 123 L957.5 124.5 L944 126.5 L930 131 L908 138 L892 148 L876 168 L857 210 L840 247 L830 284 L831 335 L838 374 L850 390 L900 395 L950 398 L965 400 L950 410 L948 430 L925 445 L880 457 L863 473 L849 500 L838 518 L824 543 L828 557 L817 572 L803 575 L788 581 L767 582 L745 597 L731 618 L738 636 L749 668 L760 708 L731 722 L702 729 L681 751 L648 765 L627 772 L616 758 L588 762 L562 769 L545 780 L512 767 L502 770 L484 782 L464 794 L450 810 L434 830 L426 850 L414 866 L406 886 L400 910 L400 930 L392 942 L388 960 L378 962 L366 990 L354 1016 L346 1038 L340 1062 L338 1074 L350 1090 L348 1106 L352 1120 L368 1140 L370 1148 L1176 1148 L1176 112Z" fill="#aad3df"/>

<g fill="#d4edbf"><path d="M232 576 L244 552 L262 544 L272 550 L276 566 L274 590 L278 612 L266 616 L246 614 L248 594 L234 580Z"/><path d="M220 876 L244 878 L260 876 L282 882 L282 900 L254 896 L234 888 L218 884Z"/><path d="M293 204 L309 203 L309 218 L294 218Z M311 201 L326 206 L326 218 L313 218Z"/><path d="M364 948 L386 948 L382 966 L364 964Z M346 966 L380 962 L370 990 L360 1006 L346 1000Z"/><path d="M194 480 L210 484 L216 500 L200 504 L194 500Z"/><path d="M230 972 L242 972 L240 982 L230 982Z"/><path d="M600 112 L618 112 L616 124 L604 126Z"/><path d="M776 112 L786 112 L784 120 L778 120Z"/></g>
<path d="M971 112 L999 112 L996 145 L989 145 L983 135 L978 128 L971 121Z" fill="#d4edbf"/><path d="M960 128 L964 129 L966 146 L963 146Z" fill="#f3e6b4"/>
<path d="M324 118 L336 115 L340 127 L348 139 L352 169 L335 180 L326 175 L318 183 L296 163 L308 142 L320 130Z" fill="#dadada"/><path d="M314 157 L317 148 L329 150 L338 142 L343 144 L335 157 L331 172 L326 172Z" fill="#cfe6c0"/><path d="M260 862 L274 868 L272 872 L262 868Z" fill="#d6d6c8"/><path d="M464 600 L472 604 L472 616 L466 614Z M494 662 L506 660 L502 672 L496 672Z" fill="#d8dccb"/>
<g fill="#aad3df"><path d="M194 127 L206 125 L214 134 L228 134 L236 128 L245 133 L251 136 L264 139 L269 142 L261 151 L251 157 L239 155 L233 167 L230 161 L224 151 L209 139 L194 134Z"/><path d="M198 169 L206 167 L210 176 L212 190 L215 214 L212 216 L203 202 L198 187Z"/><path d="M194 226 L203 229 L216 236 L236 250 L227 259 L216 254 L203 250 L194 252Z"/><path d="M295 142 L305 140 L305 149 L296 150Z M302 444 L310 446 L320 452 L316 462 L304 460Z M228 508 L236 504 L240 516 L232 520Z"/></g>
<g fill="none" stroke="#aad3df" stroke-width="2.6" stroke-linejoin="round" stroke-linecap="round"><path d="M269 378 L280 382 L282 388 L302 389 L308 395 L322 394 L326 398 L342 398 L346 410 L360 410 L374 422 L380 428 L394 422 L404 418 L414 420 L420 436 L424 446 L428 456 L432 474 L442 478 L446 484 L454 486 L458 492 L456 504 L470 520 L468 540 L478 560 L494 570 L506 586"/><path d="M530 112 L526 124 L508 144 L494 164 L492 174 L498 192 L512 204 L520 212 L520 220"/><path d="M194 524 L214 515 L230 510 L234 524 L242 516 L250 532 L260 536 L282 538 L298 546 L316 560 L332 574 L342 566 L358 570 L394 574 L414 584 L426 586 L444 602 L454 624 L460 638 L470 652 L484 666 L482 680 L490 696 L504 712 L510 740"/><path d="M270 740 L268 756 L254 754 L234 746 L226 750 L224 760"/><path d="M306 906 L320 894 L326 902 L338 904 L354 908 L360 918 L370 924 L384 918"/><path d="M194 1050 L198 1040 L206 1022 L230 1024 L248 1020 L256 1026 L272 1014 L284 1014 L292 1010 L300 1020 L306 1008 L322 1002 L334 998"/><path d="M264 1148 L274 1134 L286 1120 L306 1106 L322 1098 L336 1106 L352 1116"/><path d="M424 842 L408 854 L394 870 L386 890 L384 910 L374 922"/><path d="M418 770 L424 780 L430 800 L432 818"/><path d="M330 998 L338 1008 L346 1016 L344 1030 L338 1044 L332 1060 L334 1070"/></g>
<path d="M424 842 L408 854 L394 870 L386 890 L384 910" fill="none" stroke="#aad3df" stroke-width="5"/>
<g fill="none" stroke="#f3e6b4" stroke-width="2.5"><path d="M502 768 L484 780 L464 792"/><path d="M426 848 L414 864 L406 884 L400 908 L400 928"/><path d="M380 962 L366 990 L354 1016 L346 1038 L340 1062 L338 1074"/><path d="M878 164 L892 148 L908 138 L930 131 L944 126.5 L957.5 124.5 L963 123"/><path d="M971 121 L978 128.6 L983.6 135.5 L989 145"/><path d="M1009 121.7 L1002 134 L998.7 143.7"/></g>
<g stroke="#5a9cf0" stroke-width="2"><path d="M208 801 H218"/><path d="M225 808 H235"/><path d="M197 816 H207"/><path d="M211 813 H221"/><path d="M225 819 H235"/><path d="M192 825 H202"/><path d="M210 824 H220"/><path d="M375 839 H385"/><path d="M387 852 H397"/><path d="M395 878 H405"/><path d="M375 905 H385"/><path d="M381 924 H391"/><path d="M375 935 H385"/><path d="M395 936 H405"/><path d="M385 944 H395"/><path d="M363 956 H373"/><path d="M357 978 H367"/><path d="M341 990 H351"/><path d="M343 1004 H353"/><path d="M335 1019 H345"/><path d="M333 1030 H343"/><path d="M395 827 H405"/><path d="M413 803 H423"/><path d="M425 809 H435"/><path d="M435 811 H445"/><path d="M405 848 H415"/><path d="M381 874 H391"/><path d="M391 896 H401"/><path d="M385 914 H395"/><path d="M859 128 H869"/><path d="M867 136 H877"/><path d="M861 146 H871"/><path d="M865 156 H875"/><path d="M857 164 H867"/><path d="M901 116 H911"/><path d="M913 126 H923"/><path d="M939 118 H949"/><path d="M995 116 H1005"/></g>
<g fill="none" stroke="#bdbbb8" stroke-width="1.4" stroke-linejoin="round"><path d="M333 112 L341 114 L342 127 L350 139 L353 165 L359 177 L355 196 L355 211 L365 220 L367 228 L359 243 L332 280 L322 300 L319 308"/><path d="M314 337 L320 346 L319 360 L306 378 L306 392 L309 400 L307 410"/><path d="M340 114 L359 118 L389 122 L426 120 L460 112"/><path d="M194 216 L203 217 L227 231 L250 232 L287 220 L299 223 L359 240 L404 247 L440 262 L480 275 L501 280"/><path d="M194 374 L214 394 L230 399 L240 390 L266 389 L278 400 L294 408 L307 410 L322 412 L338 426 L364 456 L394 472 L408 484 L410 496 L402 514"/><path d="M278 400 L268 420 L262 438 L248 454 L224 472 L194 506"/><path d="M306 410 L290 430 L268 468 L272 488 L288 510 L322 538 L358 548 L400 566 L410 568"/><path d="M440 338 L444 360 L464 388 L466 410 L470 446 L482 470 L488 500 L504 520"/><path d="M402 514 L412 498 L434 476 L460 450 L474 446 L504 432"/><path d="M408 500 L404 514 L394 526 L358 568 L354 574"/><path d="M194 598 L224 588 L274 570 L294 578 L324 586 L358 578 L394 590 L420 600 L436 616 L444 636"/><path d="M226 590 L274 606 L334 614 L356 626 L370 640 L380 642 L404 636 L422 632 L454 638 L504 640"/><path d="M358 580 L354 592 L368 610 L368 636"/><path d="M194 654 L242 680 L294 670 L324 668 L338 652 L370 642"/><path d="M324 668 L314 672 L306 690 L302 720 L290 740 L270 770"/><path d="M324 668 L334 690 L334 700 L354 730 L370 748 L384 762 L394 766"/><path d="M414 566 L430 580 L452 612 L478 624 L504 632"/><path d="M454 640 L460 670 L474 690 L494 716 L504 730"/><path d="M194 780 L210 760 L218 758"/><path d="M270 816 L214 838 L194 870"/><path d="M416 762 L450 750 L474 744 L504 742"/><path d="M194 900 L214 906 L234 912 L274 914 L314 918 L348 924"/><path d="M360 892 L400 896"/><path d="M194 998 L234 991 L278 998 L294 1003 L330 999"/><path d="M194 1042 L204 1052 L218 1056 L234 1072 L264 1072 L304 1078 L322 1070 L332 1086 L338 1110 L352 1130 L356 1148"/><path d="M318 1090 L298 1102 L274 1126 L260 1148"/><path d="M420 122 L460 112"/><path d="M480 112 L512 116 L524 124 L540 142 L560 166 L600 190 L636 210"/><path d="M592 112 L612 132 L628 152 L646 172"/><path d="M532 136 L522 144 L514 164 L508 174 L508 182 L520 190 L526 194 L534 210 L538 220"/><path d="M682 164 L692 148 L704 138 L720 142 L740 148"/><path d="M774 112 L796 138 L816 154 L828 168"/><path d="M720 142 L734 146"/><path d="M916 112 L926 122 L908 134 L892 152 L882 168"/><path d="M994 112 L992 144 L980 156 L982 162"/></g>
<path d="M506 612 L484 646 L454 688 L424 740 L414 754 L394 780 L364 810 L338 830 L306 836 L254 846 L194 857" fill="none" stroke="#7a7a7a" stroke-width="1.3"/>
<path d="M908 112 L892 140 L876 168" fill="none" stroke="#7a7a7a" stroke-width="1.3"/>
<g fill="none" stroke="#f5c084" stroke-width="3" stroke-linejoin="round"><path d="M194 333.6 L218 330 L256 322 L288 324 L364 327 L404 328 L428 334 L454 339 L504 341"/><path d="M762 112 L740 144 L730 170"/><path d="M506 548 L494 580 L472 620 L450 640 L434 670 L424 690 L418 712 L418 746 L414 762 L394 794 L378 814 L368 830 L362 846 L358 862 L356 890 L350 920 L344 940 L334 970 L326 994 L328 1016 L322 1054 L322 1070 L316 1098 L320 1112 L312 1148"/><path d="M194 726 L212 748 L218 760 L230 772 L258 800 L274 814 L288 826 L302 832 L318 839 L346 836"/></g>
<path d="M714 112 L688 144 L670 162 L636 202 L620 217 L560 300 L504 378 L470 440 L450 476 L440 500 L428 522 L410 566 L380 640 L340 740 L310 814 L290 866 L286 900 L282 950 L278 990 L276 1040 L270 1056 L254 1090 L240 1126 L235 1148" fill="none" stroke="#e66e8a" stroke-width="4.2" stroke-linejoin="round"/>
<path d="M666 162 C668 156 676 156 679 162 L676 172 L666 172Z" fill="#e66e8a"/>
<g fill="none" stroke="#c58fd3" stroke-width="3" stroke-dasharray="8 5 3 5"><path d="M822 112 L1176 328"/></g>
<g fill="none" stroke="#c58fd3" stroke-width="3" stroke-dasharray="4.5 4.5"><path d="M1176 418 L1137 465 L1110.7 502.7 L1086.7 540 L1057 574.7 L1028 596 L988 616 L977.3 633 L956 662.7 L940 680"/><path d="M752 910 L740 918 L700 930 L686 934"/><path d="M534 1112 L540 1148"/><path d="M1176 120 L1160 125 L1157 135 L1170 140 L1176 138"/></g>
<text x="477" y="489" font-family="Liberation Sans" font-style="italic" font-size="14" fill="#7e5cc4">Cape</text>
<text x="494" y="509" font-family="Liberation Sans" font-style="italic" font-size="14" fill="#7e5cc4">Co</text>
<g clip-path="url(#satclip)">
<rect x="494" y="160" width="470" height="960" fill="#324f2c"/>
<rect x="494" y="160" width="470" height="960" filter="url(#mottle)"/>
<g filter="url(#soft)" fill="#66756f" opacity="0.6"><path d="M600 190 L700 180 L760 230 L740 280 L700 300 L690 340 L650 360 L620 360 L590 320 L570 300 L580 250Z"/><path d="M830 175 L880 175 L860 220 L845 260 L838 330 L830 380 L800 340 L810 260Z"/><path d="M540 330 L620 330 L640 370 L600 400 L560 395 L545 370Z"/><path d="M860 395 L930 400 L945 430 L900 450 L870 455 L855 430Z"/><path d="M585 690 L620 680 L640 720 L630 760 L600 760Z"/><path d="M715 640 L745 640 L755 700 L725 715Z"/></g>
<g mask="url(#urbmask)"><rect x="494" y="160" width="470" height="960" filter="url(#urban)"/></g>
<rect x="494" y="160" width="470" height="960" filter="url(#specks)"/>
<g filter="url(#soft)" fill="#567438" opacity="0.45"><path d="M520 240 L560 250 L590 280 L560 300 L520 290Z"/><path d="M600 480 L660 470 L680 520 L620 540Z"/><path d="M530 560 L580 560 L570 620 L530 620Z"/></g>
<g filter="url(#soft2)"><path d="M858 405 L895 410 L925 418 L915 440 L880 455 L860 440Z" fill="#7c7e6c" opacity="0.75"/><path d="M872 386 L915 392 L905 408 L878 402Z" fill="#4e3e3a" opacity="0.75"/><path d="M905 420 L948 420 L948 445 L915 448Z" fill="#5e7c4a" opacity="0.7"/><path d="M705 680 L750 690 L740 725 L705 725Z" fill="#7e948a" opacity="0.5"/></g>
<g fill="none" stroke="#a8b0a8" stroke-width="1.3" opacity="0.75"><path d="M505 377 L560 300 L620 225 L680 175"/><path d="M560 170 C600 190 640 210 700 228 C730 238 760 248 800 255"/><path d="M650 400 C680 380 720 360 760 330"/><path d="M560 560 C600 540 680 520 740 480"/><path d="M520 640 C560 620 600 600 640 560"/></g>
<path d="M518 214 C530 240 540 255 560 258 C590 262 605 250 625 250 C650 252 670 258 690 275 C715 295 740 310 765 326 C785 340 800 345 810 365 L818 381 L872 382" fill="none" stroke="#2a2d44" stroke-width="2.5"/>
<path d="M690 275 C715 295 740 310 765 326 C785 340 800 345 810 365 L818 381 L872 382" fill="none" stroke="#30344e" stroke-width="5"/>
<g clip-path="url(#seaclip)">
<rect x="500" y="160" width="188" height="960" fill="url(#glA)"/>
<rect x="647" y="160" width="171" height="752" fill="url(#glB)"/>
<rect x="816" y="160" width="142" height="750" fill="url(#glC)"/>
<rect x="816" y="160" width="142" height="450" fill="url(#darkH)" mask="url(#mTop)"/>
<rect x="494" y="160" width="470" height="960" filter="url(#streak)" mask="url(#strMaskA)" opacity="0.35"/>
</g>
<path d="M886 169 L857 210 L840 247 L830 284 L831 335 L838 374" fill="none" stroke="#d9d2b8" stroke-width="2.8" opacity="0.9"/>
<path d="M927 445 L880 457 L863 473 L850 493 L847 510" fill="none" stroke="#d8d2c0" stroke-width="2.2" opacity="0.8"/>
<path d="M786 579 L767 584 L745 597 L731 619" fill="none" stroke="#dcd8c8" stroke-width="2.5" opacity="0.85"/>
<path d="M556 768 L575 762 L590 760" fill="none" stroke="#dcd8c8" stroke-width="2" opacity="0.7"/>
</g>
<g fill="none" stroke="#3a3a3a" stroke-width="1.2"><path d="M426.5 112 V400.5 H1119.5 V112"/><rect x="501.5" y="157.5" width="456" height="965"/></g>
<g fill="#f2efe9"><path d="M1155 112 L1176 112 L1176 135 L1162 133 L1156 125Z"/><path d="M983 222 L990 218 L992 228 L985 230Z"/><path d="M998 233 L1010 228 L1012 238 L1000 242Z"/><circle cx="380" cy="1030" r="2"/></g>
<path d="M742 126 L748 137 L736 137Z" fill="#c77c43"/>
<path d="M338 688 L344 699 L332 699Z" fill="#c77c43"/>
<path d="M393 764 L399 775 L387 775Z" fill="#c77c43"/>
<path d="M233 957 L239 968 L227 968Z" fill="#c77c43"/>
<path d="M237 1113 L243 1124 L231 1124Z" fill="#c77c43"/>
<path d="M220 1129 L226 1140 L214 1140Z" fill="#c77c43"/>
<path d="M310 1107 L316 1118 L304 1118Z" fill="#c77c43"/>
<path d="M326 1113 L332 1124 L320 1124Z" fill="#c77c43"/>
<path d="M268 1133 L274 1144 L262 1144Z" fill="#c77c43"/>
<rect x="288.5" y="308.5" width="75" height="28" rx="3" fill="#f4e6d3" stroke="#d8bc96"/>
<text x="299" y="329" font-family="Liberation Sans" font-size="16" fill="#4a3a28" textLength="55" lengthAdjust="spacingAndGlyphs">ME 111</text>
<rect x="206.5" y="772.5" width="75" height="28" rx="3" fill="#f4e6d3" stroke="#d8bc96"/>
<text x="216" y="792" font-family="Liberation Sans" font-size="16" fill="#4a3a28" textLength="56" lengthAdjust="spacingAndGlyphs">ME 109</text>
<rect x="310.5" y="941.5" width="54" height="28" rx="3" fill="#f4e6d3" stroke="#d8bc96"/>
<text x="320" y="962" font-family="Liberation Sans" font-size="16" fill="#4a3a28" textLength="33" lengthAdjust="spacingAndGlyphs">US 1</text>
<rect x="396.5" y="523.5" width="53" height="27" rx="3" fill="#f2cdd6" stroke="#d990a3"/>
<text x="408" y="542" font-family="Liberation Sans" font-size="16" fill="#6a2a3a" textLength="29" lengthAdjust="spacingAndGlyphs">I 95</text>
<text x="403.5" y="640" font-family="Liberation Sans" font-size="16" fill="#3a3a3a" stroke="#f2efe9" stroke-width="3" paint-order="stroke" textLength="94" lengthAdjust="spacingAndGlyphs">Kennebunk</text>
<text x="345.5" y="841" font-family="Liberation Sans" font-size="16" fill="#3a3a3a" stroke="#f2efe9" stroke-width="3" paint-order="stroke" textLength="44" lengthAdjust="spacingAndGlyphs">Wells</text>
<text x="672" y="158" font-family="Liberation Sans" font-style="italic" font-size="15" fill="#b0324a" stroke="#f2efe9" stroke-width="2.5" paint-order="stroke" textLength="17" lengthAdjust="spacingAndGlyphs">36</text>
<text x="405" y="567" font-family="Liberation Sans" font-style="italic" font-size="15" fill="#b0324a" stroke="#f2efe9" stroke-width="2.5" paint-order="stroke" textLength="17" lengthAdjust="spacingAndGlyphs">25</text>
<text x="298" y="832" font-family="Liberation Sans" font-style="italic" font-size="15" fill="#b0324a" stroke="#f2efe9" stroke-width="2.5" paint-order="stroke" textLength="17" lengthAdjust="spacingAndGlyphs">19</text>
</svg></div>
<!-- right dock -->
<div class="t" style="left:1187px;top:114px;">Editor</div>
<div class="dockbtn" style="left:1572px;top:115px"><svg width="9" height="9" style="position:absolute;left:0;top:0"><rect x="3.5" y="1.5" width="4" height="4" fill="none" stroke="#6e6e6e"/><rect x="1.5" y="3.5" width="4" height="4" fill="#f0f0f0" stroke="#6e6e6e"/></svg></div>
<div class="dockbtn" style="left:1586px;top:115px"><svg width="9" height="9" style="position:absolute;left:0;top:0"><path d="M1.5 1.5L7.5 7.5M7.5 1.5L1.5 7.5" stroke="#6e6e6e" stroke-width="2"/></svg></div>
<div class="t" style="left:1196px;top:149px;">Zoom</div>
<div class="a" style="left:1228px;top:143px;width:57px;height:22px;border:1px solid #adadad;border-radius:2px;background:linear-gradient(#fdfdfd,#ececec)"></div>
<div class="t" style="left:1233px;top:149px;">1 : 1</div>
<div class="arr ad" style="left:1269px;top:153px"></div>
<svg class="a" style="left:1301px;top:143px" width="20" height="20" viewBox="0 0 20 20"><path d="M10 1 L13.5 5 H11.2 V8.8 H15 V6.5 L19 10 L15 13.5 V11.2 H11.2 V15 H13.5 L10 19 L6.5 15 H8.8 V11.2 H5 V13.5 L1 10 L5 6.5 V8.8 H8.8 V5 H6.5Z" fill="#222"/></svg>
<svg class="a" style="left:1334px;top:143px" width="20" height="20" viewBox="0 0 20 20"><path d="M2 3 Q2 1.5 3.5 1.5 H15 L18.5 5 V17 Q18.5 18.5 17 18.5 H3.5 Q2 18.5 2 17Z" fill="#000"/><rect x="4.5" y="3.5" width="10" height="3.5" fill="#fff"/><circle cx="10" cy="13" r="2.5" fill="#fff"/></svg>
<svg class="a" style="left:1366px;top:145px" width="22" height="16" viewBox="0 0 22 16"><path d="M6 8.5 Q13 2 20 11" stroke="#000" stroke-width="3" fill="none"/><path d="M0.5 3 V12 H9.5Z" fill="#000"/></svg>
<div class="a" style="left:1193px;top:194px;width:194px;height:535px;background:#000"></div>
<div class="a" style="left:1395px;top:194px;width:194px;height:535px;background:#000"></div>
<div class="a" style="left:1385px;top:741px;width:17px;height:1px;border-top:1px dotted #b0b0b0"></div>
<div class="t" style="left:1187px;top:748px;">Preview</div>
<div class="dockbtn" style="left:1572px;top:749px"><svg width="9" height="9" style="position:absolute;left:0;top:0"><rect x="3.5" y="1.5" width="4" height="4" fill="none" stroke="#6e6e6e"/><rect x="1.5" y="3.5" width="4" height="4" fill="#f0f0f0" stroke="#6e6e6e"/></svg></div>
<div class="dockbtn" style="left:1586px;top:749px"><svg width="9" height="9" style="position:absolute;left:0;top:0"><path d="M1.5 1.5L7.5 7.5M7.5 1.5L1.5 7.5" stroke="#6e6e6e" stroke-width="2"/></svg></div>
<div class="a" style="left:1184px;top:765px;width:415px;height:384px;background:#000"></div>
<!-- status -->
<div class="t" style="left:199px;top:1160px;font-size:11px;letter-spacing:0.05px">Lat: 43.5445524829, Lon: -70.4428031632</div>
<svg class="a" style="left:1164px;top:1163px" width="12" height="12"><g fill="#b8b8b8"><rect x="9" y="1" width="1" height="1"/><rect x="6" y="4" width="1" height="1"/><rect x="9" y="4" width="1" height="1"/><rect x="3" y="7" width="1" height="1"/><rect x="6" y="7" width="1" height="1"/><rect x="9" y="7" width="1" height="1"/></g></svg>
<svg class="a" style="left:1586px;top:1163px" width="12" height="12"><g fill="#b8b8b8"><rect x="9" y="1" width="1" height="1"/><rect x="6" y="4" width="1" height="1"/><rect x="9" y="4" width="1" height="1"/><rect x="3" y="7" width="1" height="1"/><rect x="6" y="7" width="1" height="1"/><rect x="9" y="7" width="1" height="1"/></g></svg>
<svg class="a" style="left:1586px;top:1186px" width="12" height="12"><g fill="#b8b8b8"><rect x="9" y="1" width="1" height="1"/><rect x="6" y="4" width="1" height="1"/><rect x="9" y="4" width="1" height="1"/><rect x="3" y="7" width="1" height="1"/><rect x="6" y="7" width="1" height="1"/><rect x="9" y="7" width="1" height="1"/></g></svg>
<div id="wb" class="a"></div>
</body></html>
